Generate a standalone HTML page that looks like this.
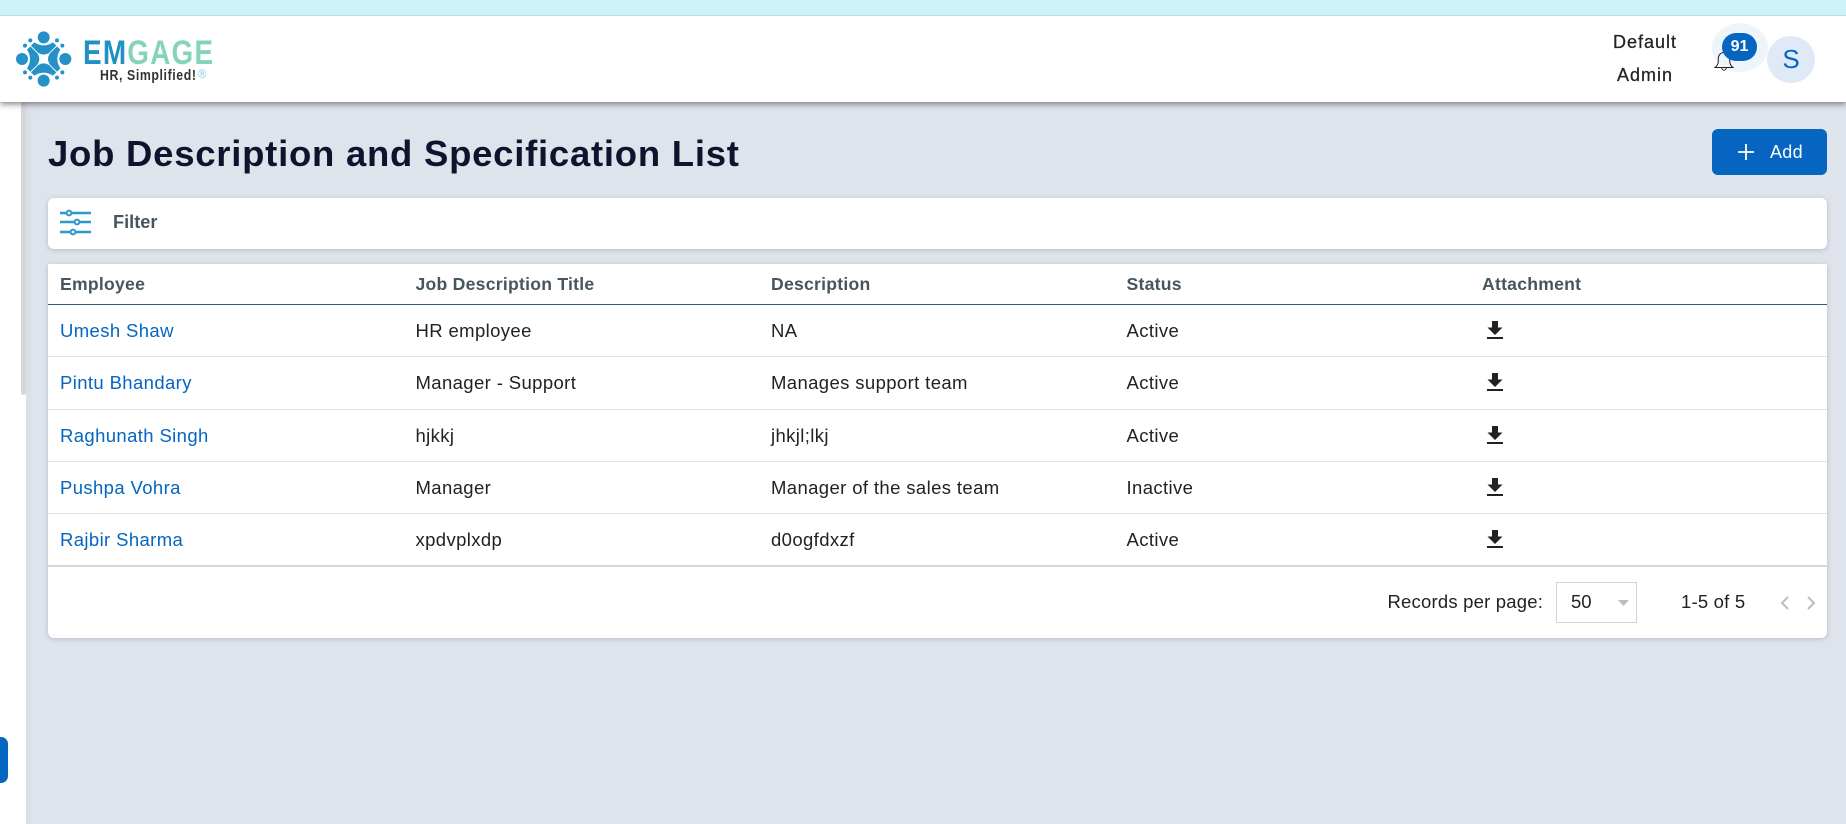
<!DOCTYPE html>
<html lang="en">
<head>
<meta charset="utf-8">
<title>Job Description and Specification List</title>
<style>
*{box-sizing:border-box}
html,body{margin:0;padding:0}
body{width:1846px;height:824px;overflow:hidden;background:#dfe3ec;font-family:"Liberation Sans",sans-serif;color:#222;position:relative}
.abs{position:absolute}
.topband{left:0;top:0;width:1846px;height:16px;background:#cff1f9;border-bottom:1px solid #b9dbe8;z-index:6}
.header{left:0;top:16px;width:1846px;height:86px;background:#fff;box-shadow:0 2px 6px rgba(60,60,70,.65);z-index:5}
.sidebar{left:0;top:102px;width:26px;height:722px;background:#fff;z-index:2}
.scroll{left:21px;top:102px;width:4.500px;height:293px;background:#d6d6d6;border-radius:0 0 3px 3px;z-index:3}
.tab{left:0;top:737px;width:8px;height:46px;background:#0565c0;border-radius:0 7px 7px 0;z-index:3}
.edge{left:26px;top:102px;width:22px;height:722px;background:linear-gradient(90deg,#d8dfea,#dfe3ec 40%)}
.t{white-space:nowrap;line-height:1}
.title{left:48px;top:136px;font-size:36.5px;font-weight:bold;color:#10132e;letter-spacing:.75px}
.add{left:1712px;top:129px;width:115px;height:46px;background:#0565c0;border-radius:6px}
.card{left:48px;background:#fff;box-shadow:0 1px 5px rgba(90,100,120,.3)}
.filter{top:198px;width:1779px;height:51px;border-radius:6px}
.tbl{top:264px;width:1779px;height:374px;border-radius:0 0 6px 6px}
.row{position:absolute;left:0;width:1779px;border-bottom:1px solid #dfe2e5}
.row span{position:absolute;top:50%;transform:translateY(-50%);white-space:nowrap;font-size:18.5px;line-height:1;letter-spacing:.38px}
.c1{left:12px}.c2{left:367.500px}.c3{left:723px}.c4{left:1078.500px}.c5{left:1434px}
.row.hd{top:0;height:42px;border-bottom:0}
.row.hd span{color:#45565f;font-weight:bold;font-size:17.6px;letter-spacing:.25px}
.rule{left:0;top:40px;width:1779px;height:1px;background:#2a5f8c}
.row a{color:#0565c0;text-decoration:none}
.dl{position:absolute;left:1439px;width:16px;height:18px;top:50%;margin-top:-10px}
</style>
</head>
<body>
<div class="abs topband"></div>
<div class="abs header">
  <svg class="abs" style="left:10px;top:9px" width="70" height="70" viewBox="0 0 210 210">
    <g fill="#2492c6">
      <g transform="translate(1 2)"><circle cx="100" cy="35" r="18"/><circle cx="60" cy="44" r="6"/><circle cx="140" cy="44" r="6"/><path d="M62 60L72 50Q100 68 128 50L138 60 116 82Q100 92 84 82Z"/></g>
      <g transform="translate(1 2) rotate(90 100 100)"><circle cx="100" cy="35" r="18"/><circle cx="60" cy="44" r="6"/><circle cx="140" cy="44" r="6"/><path d="M62 60L72 50Q100 68 128 50L138 60 116 82Q100 92 84 82Z"/></g>
      <g transform="translate(1 2) rotate(180 100 100)"><circle cx="100" cy="35" r="18"/><circle cx="60" cy="44" r="6"/><circle cx="140" cy="44" r="6"/><path d="M62 60L72 50Q100 68 128 50L138 60 116 82Q100 92 84 82Z"/></g>
      <g transform="translate(1 2) rotate(270 100 100)"><circle cx="100" cy="35" r="18"/><circle cx="60" cy="44" r="6"/><circle cx="140" cy="44" r="6"/><path d="M62 60L72 50Q100 68 128 50L138 60 116 82Q100 92 84 82Z"/></g>
    </g>
  </svg>
  <div class="abs t" style="left:83px;top:19.500px;font-size:34px;font-weight:bold;letter-spacing:1.500px;color:#2191c4;transform:scaleX(.82);transform-origin:0 0">EM<span style="color:#86d3bb">GAGE</span></div>
  <div class="abs t" style="left:100px;top:52.700px;font-size:14.500px;font-weight:bold;letter-spacing:.7px;color:#333;transform:scaleX(.85);transform-origin:0 0">HR, Simplified!</div>
  <div class="abs t" style="left:198px;top:54.300px;font-size:11.500px;color:#8cc8e4">®</div>
  <div class="abs t" style="left:1585px;width:120px;text-align:center;top:17px;font-size:18px;letter-spacing:1px;color:#222;-webkit-text-stroke:.25px #222">Default</div>
  <div class="abs t" style="left:1585px;width:120px;text-align:center;top:50px;font-size:18px;letter-spacing:1px;color:#222;-webkit-text-stroke:.25px #222">Admin</div>
  <div class="abs" style="left:1712px;top:7px;width:56px;height:49px;border-radius:50%;background:#edf5fa"></div>
  <svg class="abs" style="left:1714px;top:35px" width="20" height="21" viewBox="0 0 20 21" fill="none" stroke="#222" stroke-width="1">
    <path d="M1 16.500C3 15 4.300 13.500 4.300 10V7.500C4.300 4.200 6.800 1.500 10 1.500S15.700 4.200 15.700 7.500V10C15.700 13.500 17 15 19 16.500Z"/>
    <path d="M7.800 17A2.200 2.200 0 0 0 12.200 17"/>
  </svg>
  <div class="abs t" style="left:1722px;top:17px;width:35px;height:28px;border-radius:14px;background:#0565c0;color:#fff;font-weight:bold;font-size:16px;text-align:center;line-height:28px">91</div>
  <div class="abs t" style="left:1767px;top:20px;width:48px;height:47px;border-radius:50%;background:#dfeaf6;color:#0565c0;font-size:26px;text-align:center;line-height:47px">S</div>
</div>
<div class="abs sidebar"></div>
<div class="abs scroll"></div>
<div class="abs tab"></div>
<div class="abs edge"></div>

<div class="abs t title">Job Description and Specification List</div>

<div class="abs add">
  <svg class="abs" style="left:26px;top:15px" width="16" height="16" viewBox="0 0 16 16"><path d="M8 0V16M0 8H16" stroke="#fff" stroke-width="1.800"/></svg>
  <div class="abs t" style="left:58px;top:14px;font-size:18px;color:#fff;letter-spacing:.3px">Add</div>
</div>

<div class="abs card filter">
  <svg class="abs" style="left:12px;top:9px" width="32" height="32" viewBox="0 0 32 32" fill="#fff" stroke="#2f97cc" stroke-width="2">
    <path d="M0 6H31M0 15H31M0 25H31" stroke-width="2.400"/>
    <circle cx="9" cy="6" r="2.400"/><circle cx="17" cy="15" r="2.400"/><circle cx="13" cy="25" r="2.400"/>
  </svg>
  <div class="abs t" style="left:65px;top:15px;font-size:18.200px;font-weight:bold;color:#45565f">Filter</div>
</div>

<div class="abs card tbl">
  <div class="row hd"><span class="c1">Employee</span><span class="c2">Job Description Title</span><span class="c3">Description</span><span class="c4">Status</span><span class="c5">Attachment</span></div>
  <div class="abs rule"></div>

  <div class="row" style="top:41px;height:52px"><span class="c1"><a href="#">Umesh Shaw</a></span><span class="c2">HR employee</span><span class="c3">NA</span><span class="c4">Active</span>
    <svg class="dl" viewBox="0 0 16 18"><path d="M5 0H11V6.500H15.500L8 14 .5 6.500H5ZM0 16H16V18H0Z" fill="#222"/></svg></div>
  <div class="row" style="top:93px;height:53px"><span class="c1"><a href="#">Pintu Bhandary</a></span><span class="c2">Manager - Support</span><span class="c3">Manages support team</span><span class="c4">Active</span>
    <svg class="dl" viewBox="0 0 16 18"><path d="M5 0H11V6.500H15.500L8 14 .5 6.500H5ZM0 16H16V18H0Z" fill="#222"/></svg></div>
  <div class="row" style="top:146px;height:52px"><span class="c1"><a href="#">Raghunath Singh</a></span><span class="c2">hjkkj</span><span class="c3">jhkjl;lkj</span><span class="c4">Active</span>
    <svg class="dl" viewBox="0 0 16 18"><path d="M5 0H11V6.500H15.500L8 14 .5 6.500H5ZM0 16H16V18H0Z" fill="#222"/></svg></div>
  <div class="row" style="top:198px;height:52px"><span class="c1"><a href="#">Pushpa Vohra</a></span><span class="c2">Manager</span><span class="c3">Manager of the sales team</span><span class="c4">Inactive</span>
    <svg class="dl" viewBox="0 0 16 18"><path d="M5 0H11V6.500H15.500L8 14 .5 6.500H5ZM0 16H16V18H0Z" fill="#222"/></svg></div>
  <div class="row" style="top:250px;height:53px;border-bottom:2px solid #d5d8da"><span class="c1"><a href="#">Rajbir Sharma</a></span><span class="c2">xpdvplxdp</span><span class="c3">d0ogfdxzf</span><span class="c4">Active</span>
    <svg class="dl" viewBox="0 0 16 18"><path d="M5 0H11V6.500H15.500L8 14 .5 6.500H5ZM0 16H16V18H0Z" fill="#222"/></svg></div>

  <div class="abs t" style="left:1339.500px;top:329px;font-size:18.500px;letter-spacing:.2px;color:#222">Records per page:</div>
  <div class="abs" style="left:1508px;top:318px;width:81px;height:41px;border:1px solid #d3d3d3"></div>
  <div class="abs t" style="left:1523px;top:329px;font-size:18.500px;color:#222">50</div>
  <svg class="abs" style="left:1570px;top:336px" width="11" height="6"><path d="M0 0H11L5.500 6Z" fill="#bdbdbd"/></svg>
  <div class="abs t" style="left:1633px;top:329px;font-size:18.500px;letter-spacing:.2px;color:#222">1-5 of 5</div>
  <svg class="abs" style="left:1732px;top:332px" width="10" height="14" fill="none" stroke="#bdbdbd" stroke-width="2"><path d="M8 1L2 7 8 13"/></svg>
  <svg class="abs" style="left:1758px;top:332px" width="10" height="14" fill="none" stroke="#bdbdbd" stroke-width="2"><path d="M2 1L8 7 2 13"/></svg>
</div>
</body>
</html>
